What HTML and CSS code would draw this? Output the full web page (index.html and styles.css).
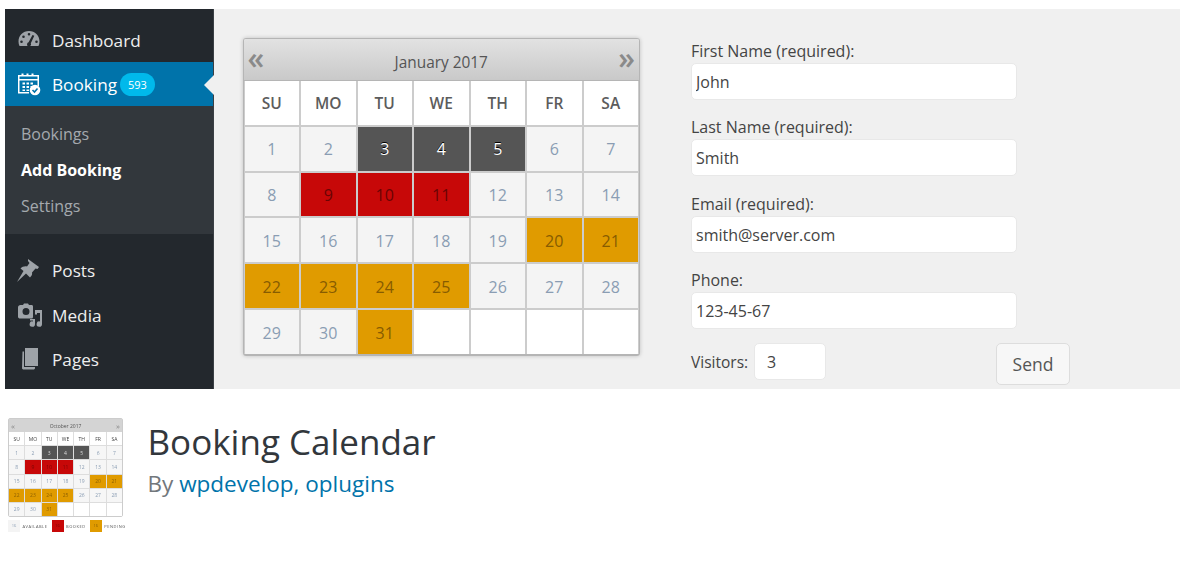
FILE: index.html
```html
<!DOCTYPE html>
<html lang="en">
<head>
  <meta charset="UTF-8" />
  <title>Booking Calendar</title>
  <link rel="stylesheet" href="styles.css">
</head>
<body>

  <div class="banner">
    <nav class="sidebar">
      <a class="menu-item">
        <svg class="menu-icon" width="24" height="24" viewBox="0 0 24 24"><path fill-rule="evenodd" d="M12 3C6 3 1.500 7.500 1.500 13.500c0 1.800.4 3.300 1 4.500h19c.6-1.200 1-2.700 1-4.500C22.500 7.500 18 3 12 3zM12 5a1.300 1.300 0 1 1 0 2.600A1.300 1.300 0 0 1 12 5zM6.500 7.500a1.300 1.300 0 1 1 0 2.600 1.300 1.300 0 0 1 0-2.600zM17.300 7.800l-3.500 7.400a2.200 2.200 0 0 1-.6 2.800h-2.500a2.200 2.200 0 0 1 .9-3.700l3.900-7.300zM4.500 12.500a1.300 1.300 0 1 1 0 2.600 1.300 1.300 0 0 1 0-2.600zM19.500 12.500a1.300 1.300 0 1 1 0 2.600 1.300 1.300 0 0 1 0-2.600z"/></svg>
        Dashboard
      </a>
      <a class="menu-item current">
        <svg class="menu-icon" width="24" height="24" viewBox="0 0 24 24">
          <path fill-rule="evenodd" d="M1 3h3.500V1.500h2V3h3V1.500h2V3h3V1.500h2V3H22v11h-1.500V8.500h-18V20H12v1.500H1zM2.500 4.500V7h18V4.500zM5.500 10.500h2.500v2H5.500zM9.500 10.500h2.500v2H9.500zM13.500 10.500h2.500v2h-2.500zM5.500 14h2.500v2H5.500zM9.500 14h2.500v2H9.500zM13.500 14h1.500v1h-1.500zM5.500 17.500h2.500v1.500H5.500zM9.500 17.500h2.500v1.500H9.500z"/>
          <circle cx="18" cy="18" r="5.300"/>
          <path d="M15.500 18l2 2 3-3.500" fill="none" stroke="#0073aa" stroke-width="1.600"/>
        </svg>
        Booking
        <span class="badge">593</span>
      </a>
      <div class="submenu">
        <a>Bookings</a>
        <a class="active">Add Booking</a>
        <a>Settings</a>
      </div>
      <a class="menu-item">
        <svg class="menu-icon" width="24" height="24" viewBox="0 0 24 24"><path d="M11 0l11 8-1.500 2-2-.5-3.500 4c.5 2-.5 3.500-2 5l-4-4L0 23l6.500-11-3-2.500c1.500-1.500 4-2.500 6.500-2l2.500-3.500-1.500-2z"/></svg>
        Posts
      </a>
      <a class="menu-item">
        <svg class="menu-icon" width="26" height="24" viewBox="0 0 26 24"><path fill-rule="evenodd" d="M3.500 2H6l1-1.500h4L12 2h2.500c1 0 1.500.6 1.500 1.500V14c0 .9-.5 1.500-1.500 1.500H3c-1 0-2-.6-2-1.500V4.500C1 3 2 2 3.500 2zM9 5a3.500 3.500 0 1 0 0 7 3.500 3.500 0 0 0 0-7z"/><path d="M18 7h7v14a2.700 2.700 0 1 1-2-2.500V10h-3v1.500h-2zM13 16h5v5a2.700 2.700 0 1 1-2-2.500V17.500h-3z"/></svg>
        Media
      </a>
      <a class="menu-item">
        <svg class="menu-icon" width="24" height="24" viewBox="0 0 24 24"><path d="M8 1h13v18H8z"/><path d="M5.500 4.500H7V20h11v1.500l-1 1H6l-1-1z" /></svg>
        Pages
      </a>
    </nav>

    <div class="demo">
      <div class="calendar">
        <div class="cal-header">
          <span class="cal-nav">«</span>
          <span class="cal-title">January 2017</span>
          <span class="cal-nav">»</span>
        </div>
        <div class="cal-grid">
          <div class="day-name">SU</div><div class="day-name">MO</div><div class="day-name">TU</div><div class="day-name">WE</div><div class="day-name">TH</div><div class="day-name">FR</div><div class="day-name">SA</div>
          <div class="day">1</div><div class="day">2</div><div class="day past">3</div><div class="day past">4</div><div class="day past">5</div><div class="day">6</div><div class="day">7</div>
          <div class="day">8</div><div class="day booked">9</div><div class="day booked">10</div><div class="day booked">11</div><div class="day">12</div><div class="day">13</div><div class="day">14</div>
          <div class="day">15</div><div class="day">16</div><div class="day">17</div><div class="day">18</div><div class="day">19</div><div class="day pending">20</div><div class="day pending">21</div>
          <div class="day pending">22</div><div class="day pending">23</div><div class="day pending">24</div><div class="day pending">25</div><div class="day">26</div><div class="day">27</div><div class="day">28</div>
          <div class="day">29</div><div class="day">30</div><div class="day pending">31</div><div class="day empty"></div><div class="day empty"></div><div class="day empty"></div><div class="day empty"></div>
        </div>
      </div>

      <form class="booking-form">
        <div class="field">
          <label>First Name (required):</label>
          <input type="text" value="John" />
        </div>
        <div class="field">
          <label>Last Name (required):</label>
          <input type="text" value="Smith" />
        </div>
        <div class="field">
          <label>Email (required):</label>
          <input type="text" value="smith@server.com" />
        </div>
        <div class="field">
          <label>Phone:</label>
          <input type="text" value="123-45-67" />
        </div>
        <div class="last-row">
          <label>Visitors:</label>
          <input class="visitors" type="text" value="3" />
          <button type="button">Send</button>
        </div>
      </form>
    </div>
  </div>

  <div class="plugin-header">
    <div class="thumb">
      <div class="mini-cal">
        <div class="mini-header"><span class="mini-nav">«</span><span>October 2017</span><span class="mini-nav">»</span></div>
        <div class="mini-grid">
          <div class="name">SU</div><div class="name">MO</div><div class="name">TU</div><div class="name">WE</div><div class="name">TH</div><div class="name">FR</div><div class="name">SA</div>
          <div>1</div><div>2</div><div class="past">3</div><div class="past">4</div><div class="past">5</div><div>6</div><div>7</div>
          <div>8</div><div class="booked">9</div><div class="booked">10</div><div class="booked">11</div><div>12</div><div>13</div><div>14</div>
          <div>15</div><div>16</div><div>17</div><div>18</div><div>19</div><div class="pending">20</div><div class="pending">21</div>
          <div class="pending">22</div><div class="pending">23</div><div class="pending">24</div><div class="pending">25</div><div>26</div><div>27</div><div>28</div>
          <div>29</div><div>30</div><div class="pending">31</div><div class="name"></div><div class="name"></div><div class="name"></div><div class="name"></div>
        </div>
      </div>
      <div class="legend">
        <span class="swatch">16</span><span class="legend-label">AVAILABLE</span>
        <span class="swatch booked">16</span><span class="legend-label">BOOKED</span>
        <span class="swatch pending">16</span><span class="legend-label">PENDING</span>
      </div>
    </div>
    <div class="plugin-info">
      <h1>Booking Calendar</h1>
      <p>By <a>wpdevelop, oplugins</a></p>
    </div>
  </div>

</body>
</html>
```

FILE: styles.css
```css
:root {
  --side-dark: #23282d;
  --side-sub: #32373c;
  --blue: #0073aa;
  --panel: #f0f0f0;
  --booked: #c70808;
  --pending: #e09b00;
  --past: #555;
}

* {
  box-sizing: border-box;
  margin: 0;
  padding: 0;
}

body {
  font-family: "Open Sans", sans-serif;
  background: #fff;
  padding: 9px 7px 0 5px;
  color: #444;
}

.banner {
  display: flex;
  height: 380px;
  background: var(--panel);
  overflow: hidden;
}

/* admin sidebar */
.sidebar {
  width: 209px;
  flex-shrink: 0;
  padding-top: 9px;
  background: var(--side-dark);
  border-right: 1px solid #3a3f44;
}

.menu-item {
  position: relative;
  display: flex;
  align-items: center;
  height: 44.200px;
  padding-left: 47px;
  font-size: 17.200px;
  color: #eee;
}

.menu-icon {
  position: absolute;
  left: 12px;
  top: 10px;
  fill: #9ea3a8;
}

.menu-item.current {
  background: var(--blue);
  color: #fff;
}

.menu-item.current .menu-icon {
  fill: #fff;
}

.menu-item.current::after {
  content: "";
  position: absolute;
  right: -1px;
  top: 13px;
  border: 10px solid transparent;
  border-left-width: 0;
  border-right-color: var(--panel);
}

.badge {
  margin-left: 3px;
  padding: 0 8px;
  height: 23px;
  line-height: 23px;
  border-radius: 12px;
  background: #00b9eb;
  color: #fff;
  font-size: 11px;
}

.submenu {
  display: flex;
  flex-direction: column;
  gap: 8px;
  height: 128px;
  margin-bottom: 14.400px;
  padding: 14px 0 0 16px;
  background: var(--side-sub);
  font-size: 16px;
  line-height: 28px;
  color: #a4a9ae;
}

.submenu .active {
  color: #fff;
  font-weight: 700;
}

/* demo area */
.demo {
  flex: 1;
  display: flex;
  align-items: flex-start;
  padding: 29px 0 0 28.500px;
}

.calendar {
  width: 397.500px;
  height: 318px;
  border: 1px solid #b5b5b5;
  border-bottom-width: 2px;
  border-radius: 3px;
  box-shadow: 0 0 4px rgba(0, 0, 0, 0.2);
  overflow: hidden;
}

.cal-header {
  display: flex;
  justify-content: space-between;
  align-items: center;
  height: 42px;
  padding: 0 4px;
  background: linear-gradient(#e2e2e2, #c9c9c9);
  border-bottom: 1px solid #b5b5b5;
}

.cal-title {
  font-size: 15.400px;
  font-weight: 400;
  color: #555;
  padding-top: 5px;
}

.cal-nav {
  font-size: 30px;
  line-height: 30px;
  font-weight: 600;
  color: #8a8a8a;
  margin-top: -4px;
}

.cal-grid {
  display: grid;
  grid-template-columns: repeat(7, 1fr);
  grid-auto-rows: 1fr;
  gap: 2px;
  height: 273px;
  padding: 0 1px;
  background: #ccc;
}

.day-name, .day {
  display: flex;
  align-items: center;
  justify-content: center;
  padding-top: 1px;
  font-size: 16px;
}

.day-name {
  background: #fff;
  color: #5c5c5c;
  font-weight: 600;
  font-size: 15.500px;
}

.day {
  background: #f4f4f4;
  color: #8a9db3;
}

.day.empty {
  background: #fff;
}

.day.past {
  background: var(--past);
  color: #fff;
  text-shadow: 0 -1px 0 #000;
}

.day.booked {
  background: var(--booked);
  color: #6a0404;
}

.day.pending {
  background: var(--pending);
  color: #875c00;
}

/* form */
.booking-form {
  width: 379px;
  margin-left: 51px;
  padding-top: 3px;
}

.field {
  margin-bottom: 17.400px;
}

.field label {
  display: block;
  font-size: 16px;
  line-height: 21px;
  margin-bottom: 1px;
  color: #444;
}

input {
  display: block;
  width: 326px;
  height: 37px;
  padding: 1px 4px 0;
  font-family: inherit;
  font-size: 16px;
  color: #444;
  background: #fff;
  border: 1px solid #e8e8e8;
  border-radius: 5px;
}

.last-row {
  display: flex;
  align-items: flex-start;
  margin-top: -3.500px;
}

.last-row label {
  font-size: 15.500px;
  line-height: 39px;
  margin-right: 6px;
}

input.visitors {
  width: 72px;
  padding-left: 12px;
}

button {
  width: 74px;
  height: 42px;
  margin-left: auto;
  font-family: inherit;
  font-size: 17.500px;
  color: #555;
  background: #f7f7f7;
  border: 1px solid #ddd;
  border-radius: 5px;
}

/* plugin title block */
.plugin-header {
  display: flex;
  padding: 29px 0 0 3px;
}

.thumb {
  width: 115px;
  height: 115px;
  filter: blur(0.5px);
}

.mini-cal {
  border: 1px solid #ccc;
  border-radius: 2px;
  height: 99px;
}

.mini-header {
  display: flex;
  justify-content: space-between;
  align-items: center;
  height: 13px;
  padding: 0 2px;
  background: #d4d4d4;
  font-size: 5px;
  color: #555;
}

.mini-nav {
  font-size: 8px;
  line-height: 8px;
  color: #888;
}

.mini-grid {
  display: grid;
  grid-template-columns: repeat(7, 1fr);
  grid-auto-rows: 1fr;
  gap: 1px;
  height: 84px;
  background: #ddd;
  font-size: 5px;
  color: #8a9db3;
}

.mini-grid div {
  display: flex;
  align-items: center;
  justify-content: center;
  background: #f6f6f6;
}

.mini-grid .name {
  background: #fff;
  color: #444;
}

.mini-grid .past {
  background: var(--past);
  color: #ddd;
}

.mini-grid .booked, .swatch.booked {
  background: var(--booked);
  color: #7c0606;
}

.mini-grid .pending, .swatch.pending {
  background: var(--pending);
  color: #8f6200;
}

.legend {
  display: flex;
  align-items: center;
  margin-top: 3px;
  font-size: 4px;
  color: #555;
}

.swatch {
  width: 12px;
  height: 12px;
  line-height: 12px;
  text-align: center;
  background: #f4f4f4;
  color: #8a9db3;
  flex-shrink: 0;
}

.legend-label {
  margin: 0 4px 0 2.500px;
  letter-spacing: 0.550px;
}

.plugin-info {
  margin-left: 24.500px;
}

h1 {
  font-size: 35px;
  font-weight: 400;
  line-height: 48px;
  color: #32373c;
}

p {
  font-size: 22.500px;
  line-height: 36px;
  color: #72777c;
}

p a {
  color: var(--blue);
}
```
